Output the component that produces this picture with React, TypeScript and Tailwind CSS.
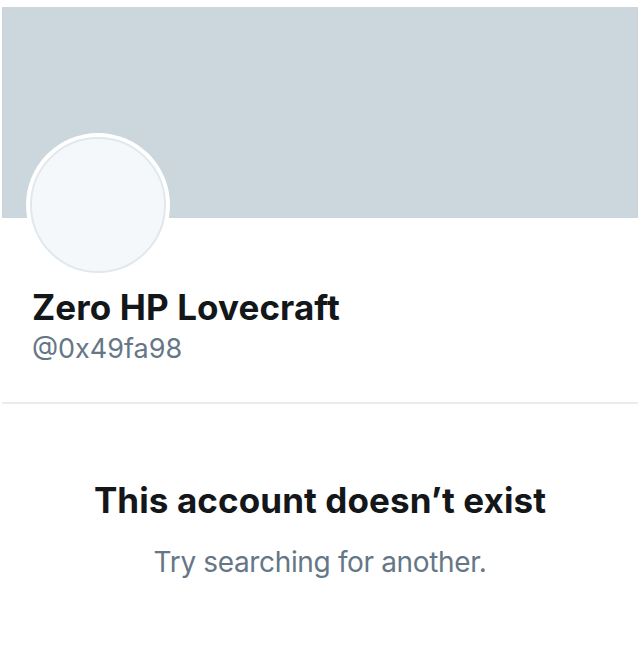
export default function App() {
  return (
    <div
      className="h-[665px] w-[640px] overflow-hidden bg-white text-[#14171a]"
      style={{ fontFamily: "Inter, 'Noto Sans', sans-serif" }}
    >
      <div className="px-[2px] pt-[7px]">
        <div className="h-[211px] bg-[#ccd6dd]" />
      </div>

      <div className="px-[32px]">
        <div className="-mt-[85px] ml-[-6px] h-[144px] w-[144px] rounded-full bg-white p-[4px]">
          <div className="h-full w-full rounded-full border-2 border-[#e1e8ed] bg-[#f5f8fa]" />
        </div>
        <h1 className="mt-[9px] text-[35px] font-bold leading-[42px] tracking-[0.1px]">
          Zero HP Lovecraft
        </h1>
        <p className="mt-[4px] text-[27px] leading-[34px] text-[#657786]">
          @0x49fa98
        </p>
      </div>

      <div className="mx-[2px] mt-[36px] h-[2px] bg-[#e6ecf0]" />

      <div className="pt-[75px] text-center">
        <h2 className="text-[35px] font-bold leading-[42px] tracking-[0.1px]">
          This account doesn’t exist
        </h2>
        <p className="mt-[24px] text-[28px] leading-[34px] tracking-[-0.35px] text-[#657786]">
          Try searching for another.
        </p>
      </div>
    </div>
  );
}
